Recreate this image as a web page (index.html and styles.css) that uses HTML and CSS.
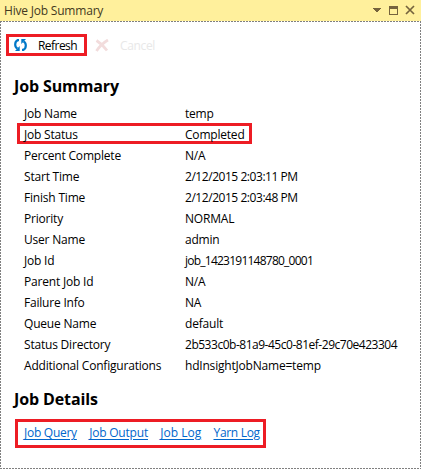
FILE: index.html
```html
<!DOCTYPE html>
<html lang="en">
<head>
<meta charset="utf-8">
<title>Hive Job Summary</title>
<link rel="stylesheet" href="styles.css">
</head>
<body>
<div class="window">
  <header class="titlebar">
    <span class="title">Hive Job Summary</span>
    <svg class="controls" width="44" height="21" viewBox="0 0 44 21" shape-rendering="crispEdges">
      <path d="M0 8h8v1H0zM1 9h6v1H1zM2 10h4v1H2zM3 11h2v1H3z" fill="#75633d"/>
      <path d="M16 6h9v9h-9zM17 9v5h7V9z" fill="#75633d" fill-rule="evenodd"/>
      <path d="M33 6l8 8M41 6l-8 8" stroke="#75633d" stroke-width="1.7" shape-rendering="auto"/>
    </svg>
  </header>
  <main class="panel">
    <div class="toolbar">
      <button class="tool refresh" type="button">
        <svg width="13" height="12" viewBox="0 0 13 12">
          <path d="M5 1.200H3.500Q1.200 2.500 1.200 5.500T3.500 9.500M8 10.800H9.500Q11.800 9.500 11.800 6.500T9.500 2.500" fill="none" stroke="#0078c8" stroke-width="2.200"/>
          <path d="M5.700 7V12H1zM7.300 5V0H12z" fill="#0078c8"/>
        </svg>
        <span class="refresh-label">Refresh</span>
      </button>
      <button class="tool cancel" type="button">
        <svg width="14" height="13" viewBox="0 0 14 13"><path d="M1.500 1.500Q7 5 12 11.500M13 1Q6 5 1.500 12" fill="none" stroke="#f2dcdc" stroke-width="2.800"/></svg>
        <span class="cancel-label">Cancel</span>
      </button>
    </div>
    <h1 class="heading summary-heading">Job Summary</h1>
    <dl class="rows">
      <div class="row"><dt>Job Name</dt><dd>temp</dd></div>
      <div class="row marked"><dt>Job Status</dt><dd>Completed</dd></div>
      <div class="row"><dt>Percent Complete</dt><dd>N/A</dd></div>
      <div class="row"><dt>Start Time</dt><dd class="time">2/12/2015 2:03:11 PM</dd></div>
      <div class="row"><dt>Finish Time</dt><dd class="time">2/12/2015 2:03:48 PM</dd></div>
      <div class="row"><dt>Priority</dt><dd>NORMAL</dd></div>
      <div class="row"><dt>User Name</dt><dd>admin</dd></div>
      <div class="row"><dt>Job Id</dt><dd class="job-id">job_1423191148780_0001</dd></div>
      <div class="row"><dt>Parent Job Id</dt><dd>N/A</dd></div>
      <div class="row"><dt>Failure Info</dt><dd>NA</dd></div>
      <div class="row"><dt>Queue Name</dt><dd>default</dd></div>
      <div class="row"><dt>Status Directory</dt><dd class="directory">2b533c0b-81a9-45c0-81ef-29c70e423304</dd></div>
      <div class="row"><dt>Additional Configurations</dt><dd>hdInsightJobName=temp</dd></div>
    </dl>
    <h1 class="heading details-heading">Job Details</h1>
    <nav class="links">
      <a href="#" class="query">Job Query</a>
      <a href="#" class="output">Job Output</a>
      <a href="#" class="log">Job Log</a>
      <a href="#" class="yarn">Yarn Log</a>
    </nav>
  </main>
</div>
</body>
</html>
```
FILE: styles.css
```css
* { box-sizing: border-box; }
body {
  margin: 0;
  background: #fff;
  color: #000;
  font: 12px/21px "Open Sans", "Noto Sans", sans-serif;
  letter-spacing: -0.2px;
  white-space: nowrap;
}
.window { width: 421px; height: 469px; display: flex; flex-direction: column; overflow: hidden; }
.titlebar {
  height: 21px;
  flex: none;
  display: flex;
  justify-content: space-between;
  padding: 0 4px 0 4px;
  background: #fff09c;
  color: #43391f;
}
.controls { flex: none; }
.panel {
  flex: 1;
  padding: 13px 6px 0;
  background:
    repeating-linear-gradient(90deg, #808080 0 2px, transparent 2px 3px) top / 100% 1px no-repeat,
    repeating-linear-gradient(90deg, #808080 0 2px, transparent 2px 3px) bottom / 100% 1px no-repeat,
    repeating-linear-gradient(#808080 0 2px, transparent 2px 3px) left / 1px 100% no-repeat,
    repeating-linear-gradient(#808080 0 2px, transparent 2px 3px) right / 1px 100% no-repeat;
}
.toolbar { display: flex; height: 22px; }
.tool {
  display: flex;
  align-items: center;
  margin: 0;
  padding: 0;
  border: 0;
  background: none;
  font: inherit;
  letter-spacing: inherit;
}
.refresh { width: 81px; padding-left: 5px; gap: 11px; border: 3px solid #ed1c24; color: #000; letter-spacing: -0.55px; }
.cancel { padding-left: 8px; gap: 11px; color: #e8e8e8; letter-spacing: -0.35px; }
.heading { margin: 0; padding-left: 8px; font-size: 16px; font-weight: 700; line-height: 24px; letter-spacing: -0.12px; }
.summary-heading { margin-top: 18px; }
.rows { margin: 4px 0 0 11px; }
.row { display: grid; grid-template-columns: 161px 1fr; height: 21px; padding-left: 7px; line-height: 23px; }
.row dt, .row dd { margin: 0; }
.marked { width: 235px; border: 3px solid #ed1c24; padding-left: 4px; line-height: 17px; }
.time { letter-spacing: -0.45px; }
.job-id { letter-spacing: -0.76px; }
.directory { letter-spacing: -0.48px; }
.details-heading { margin-top: 12px; }
.links {
  display: flex;
  gap: 12.3px;
  align-items: center;
  width: 251px;
  height: 29px;
  margin: 8px 0 0 9px;
  padding: 0 0 2px 6px;
  border: 3px solid #ed1c24;
}
.links a { color: #0066cc; text-decoration: underline; text-underline-offset: 2px; }
.links .query { letter-spacing: -0.27px; }
.links .log { letter-spacing: 0; }
.links .yarn { letter-spacing: -0.3px; }
```
